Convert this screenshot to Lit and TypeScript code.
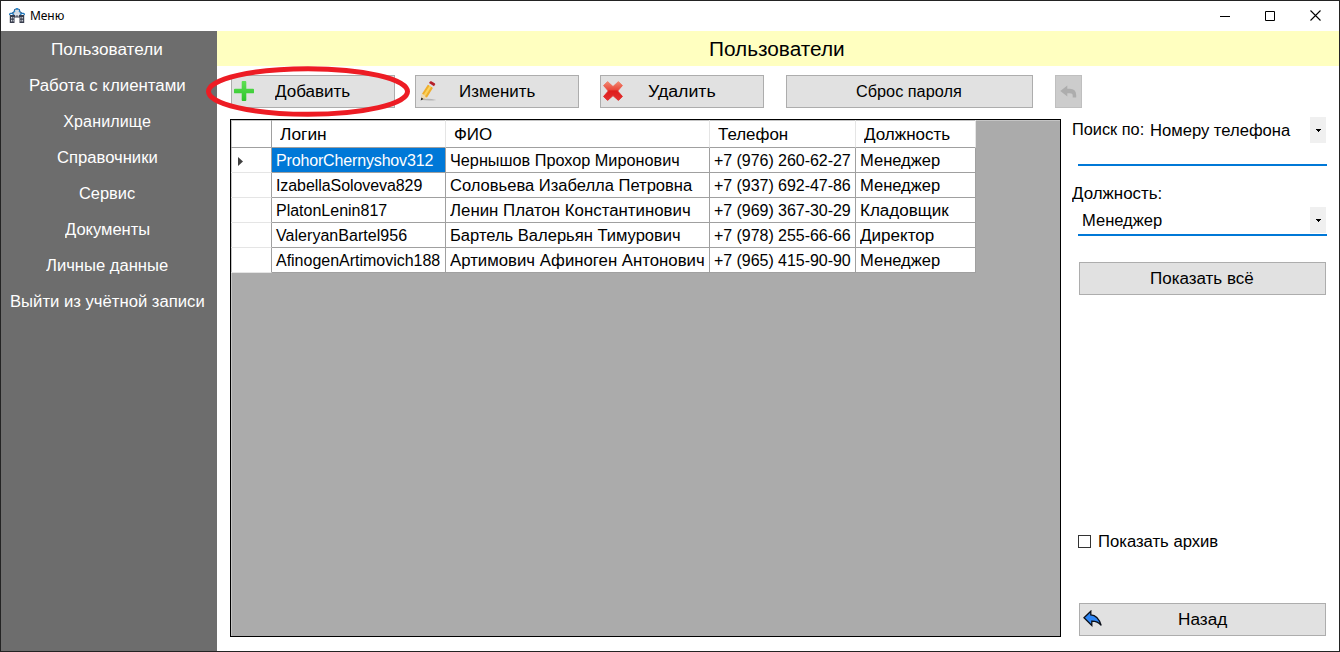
import { LitElement, html, css } from "lit";
import { customElement, property } from "lit/decorators.js";

/** Text run that is fitted to a given width: widened glyphs when short, tighter tracking when long. */
@customElement("fit-text")
class FitText extends LitElement {
  @property() text = "";
  @property({ type: Number }) w = 0;

  static styles = css`
    :host { display: inline-block; white-space: pre; flex: none; text-align: left; }
    .run { display: inline-block; transform-origin: 0 50%; }
  `;

  updated() {
    const run = this.renderRoot.querySelector(".run") as HTMLElement;
    run.style.letterSpacing = "0px";
    run.style.transform = "none";
    const natural = run.getBoundingClientRect().width;
    const target = this.w - 0.8;
    const ratio = target / natural;
    if (ratio > 1.015) {
      run.style.transform = `scaleX(${ratio.toFixed(4)})`;
    } else {
      run.style.letterSpacing = `${((target - natural) / this.text.length).toFixed(3)}px`;
    }
    this.style.width = `${this.w}px`;
  }

  render() {
    return html`<span class="run">${this.text}</span>`;
  }
}

const t = (text: string, w: number) => html`<fit-text .text=${text} .w=${w}></fit-text>`;

const MENU: [string, number][] = [
  ["Пользователи", 112.5],
  ["Работа с клиентами", 157.5],
  ["Хранилище", 88.5],
  ["Справочники", 101.5],
  ["Сервис", 57],
  ["Документы", 86],
  ["Личные данные", 123],
  ["Выйти из учётной записи", 195.5],
];

const HEADERS: [string, number][] = [
  ["Логин", 47.5],
  ["ФИО", 39],
  ["Телефон", 71],
  ["Должность", 87],
];

const ROWS: [string, number][][] = [
  [["ProhorChernyshov312", 158], ["Чернышов Прохор Миронович", 230.5], ["+7 (976) 260-62-27", 137.5], ["Менеджер", 81]],
  [["IzabellaSoloveva829", 147], ["Соловьева Изабелла Петровна", 243], ["+7 (937) 692-47-86", 137.5], ["Менеджер", 81]],
  [["PlatonLenin817", 112], ["Ленин Платон Константинович", 241.5], ["+7 (969) 367-30-29", 137.5], ["Кладовщик", 89.5]],
  [["ValeryanBartel956", 132], ["Бартель Валерьян Тимурович", 231.5], ["+7 (978) 255-66-66", 137.5], ["Директор", 75]],
  [["AfinogenArtimovich188", 165], ["Артимович Афиноген Антонович", 255.5], ["+7 (965) 415-90-90", 137.5], ["Менеджер", 81]],
];

const houseIcon = html`<svg class="house" width="16" height="16" viewBox="0 0 16 16">
  <path d="M3 7.500V4.600L5 3.600 5.600 1.600 7.400.8h1.200l1.800.8.6 2 2 1v2.900z" fill="#d3dae3"/>
  <path d="M2.600 5.800 4 4.400l1.200-.6.400-2.200L7.400.8h1.200l1.800.8.400 2.200 1.200.6 1.400 1.400" fill="none" stroke="#2f5f8d" stroke-width="1.100"/>
  <path d="M7 1h2M4.800 3.400h1.400M9.800 3.400h1.400" stroke="#1d8ad6" stroke-width="1.300"/>
  <path d="M0 6.800 1.600 5.400h2L5 6.800M11 6.800l1.400-1.400h2L16 6.800" stroke="#2379bd" stroke-width="1.400" fill="none"/>
  <path d="M.8 7h4.700v8H.8zM10.500 7h4.700v8h-4.700zM5.200 7h5.600v2.500H5.200z" fill="#383d4d"/>
  <path d="M2 9h.9v1.500H2zM3.700 9h.9v1.500h-.9zM2 11.800h.9v1.600H2zM3.700 11.800h.9v1.600h-.9zM11.500 9h.9v1.500h-.9zM13.200 9h.9v1.500h-.9zM11.500 11.800h.9v1.600h-.9zM13.200 11.800h.9v1.600h-.9zM6.200 6h.9v2.400h-.9zM7.600 6h.9v2.400h-.9zM9 6h.9v2.400H9z" fill="#e4e8ee"/>
</svg>`;

const plusIcon = html`<svg class="ico" width="20" height="20" viewBox="0 0 20 20">
  <defs><linearGradient id="g" x1="0" y1="0" x2="0" y2="1"><stop offset="0" stop-color="#5fe053"/><stop offset="1" stop-color="#2cc42a"/></linearGradient></defs>
  <path d="M8.600 0h2.800q.9 0 .9.9v6.800h6.800q.9 0 .9.9v2.800q0 .9-.9.9h-6.800v6.800q0 .9-.9.9H8.600q-.9 0-.9-.9v-6.800H.9q-.9 0-.9-.9V8.600q0-.9.9-.9h6.800V.9q0-.9.9-.9z" fill="url(#g)"/>
</svg>`;

const pencilIcon = html`<svg class="ico pencil" width="20" height="20" viewBox="0 0 20 20">
  <path d="M1.500 18.700q7-1.800 15.800.2-7 1.300-15.800-.2z" fill="#b5b5b5"/>
  <path d="M3 12.800 9 3.600l5 3.100-5.800 9.500-5.800 2.800z" fill="#efae2c"/>
  <path d="M4.800 13.400 10.700 4.600l1.700 1-5.900 9.500z" fill="#fbd35c"/>
  <path d="M3 12.800 2 19l6.200-2.800-1.800-.5-.8-1.700z" fill="#ecd9b4"/>
  <path d="m2.400 16.600-.7 2.800 2.800-1.300z" fill="#222"/>
  <path d="m9 3.600 1-1.500 5 3.100-1 1.500z" fill="#dfe0e2"/>
  <path d="m10 2.100 1-1.500q.5-.7 1.300-.3l3.400 2q.8.600.4 1.300l-1.100 1.600z" fill="#b5202a"/>
</svg>`;

const crossIcon = html`<svg class="ico" width="20" height="20" viewBox="0 0 20 20">
  <defs><linearGradient id="r" x1="0" y1="0" x2="0" y2="1"><stop offset="0" stop-color="#f08a72"/><stop offset=".42" stop-color="#ea4a3c"/><stop offset=".5" stop-color="#de1c1c"/><stop offset="1" stop-color="#e23030"/></linearGradient></defs>
  <path d="M4.600.6 10 5.600 15.400.6 19.400 4.600 14.600 10l4.800 5.400-4 4L10 14.600l-5.400 4.800-4-4L5.400 10 .6 4.600z" fill="url(#r)" stroke="url(#r)" stroke-width="1" stroke-linejoin="round"/>
</svg>`;

const undoDisabled = html`<svg width="17" height="14" viewBox="0 0 17 14">
  <path d="M.3 6 7.300.6v3.200h2.500q6.200 0 6.400 6.200v2.600h-3.500v-1.900q0-2.400-2.800-2.400H7.300v3.300z" fill="#adadad"/>
</svg>`;

const backIcon = html`<svg class="ico back" width="20" height="18" viewBox="0 0 20 18">
  <path d="M1 7.800 7.800 1.200v3.600Q15 5 18.200 15.400 14.400 11 8.800 11.200v4.300z" fill="#2e86f5" stroke="#0b0f18" stroke-width="1.300" stroke-linejoin="miter"/>
</svg>`;

const arrow = html`<svg width="5" height="3" viewBox="0 0 5 3" shape-rendering="crispEdges"><path d="M0 0h5v1H4v1H3v1H2V2H1V1H0z" fill="#000"/></svg>`;

@customElement("app-root")
class AppRoot extends LitElement {
  static styles = css`
    :host { display: block; width: 1340px; height: 652px; font: 16px/20px "Liberation Sans", Arial, sans-serif; color: #000; }
    * { box-sizing: border-box; }
    svg { display: block; flex: none; }
    .window { position: relative; width: 1340px; height: 652px; border: 1px solid #232323; background: #fff; display: flex; flex-direction: column; overflow: hidden; }
    .titlebar { height: 30px; flex: none; display: flex; align-items: center; padding-left: 8px; }
    .caption { font: 12px/16px "Noto Sans", "Open Sans", sans-serif; margin-left: 5px; flex: 1; }
    .controls { display: flex; align-items: center; gap: 35px; padding-right: 18px; margin-top: -1px; }
    .body { flex: 1; display: flex; min-height: 0; }
    .sidebar { width: 216px; background: #6d6d6d; color: #fff; flex: none; }
    .item { height: 36px; display: flex; align-items: center; justify-content: center; padding: 2px 3px 0 0; }
    .content { flex: 1; display: flex; flex-direction: column; min-width: 0; }
    .heading { height: 35px; flex: none; background: #ffffc0; display: flex; align-items: center; justify-content: center; font-size: 20px; line-height: 24px; padding-right: 2px; }
    .work { flex: 1; display: flex; align-items: flex-start; padding: 9px 0 0 13px; min-height: 0; }
    .left { width: 842px; flex: none; display: flex; flex-direction: column; }
    .toolbar { display: flex; height: 33px; flex: none; padding-left: 1px; margin-bottom: 11px; }
    .btn { height: 33px; flex: none; border: 1px solid #adadad; background: #e1e1e1; display: grid; grid-template-columns: 1fr; align-items: center; justify-items: center; padding: 0; font: inherit; color: #000; }
    .btn > * { grid-area: 1 / 1; }
    .ico { justify-self: start; margin-left: 2px; margin-top: -1px; }
    .pencil { margin-left: 3px; }
    .back { margin-left: 3px; }
    .std { width: 164px; }
    .edit { margin-left: 20px; }
    .del { margin-left: 21px; }
    .reset { width: 247px; margin-left: 22px; }
    .undo { width: 27px; margin-left: 22px; background: #ccc; border-color: #bfbfbf; }
    .grid { width: 831px; height: 518px; flex: none; border: 1px solid #000; background: #ababab; box-shadow: inset 1px 1px 0 #c4c4c4; }
    .row { display: grid; grid-template-columns: 41px 174px 264px 146px 120px; width: 745px; height: 25px; background: #fff; box-shadow: inset 1px 0 0 #c4c4c4; }
    .head { height: 28px; box-shadow: inset 1px 1px 0 #c4c4c4; }
    .cell { border-right: 1px solid #a0a0a0; border-bottom: 1px solid #a0a0a0; display: flex; align-items: center; padding: 2px 0 0 4px; }
    .head .cell { border-right-color: #e5e5e5; padding: 3px 0 0 8px; }
    .head .cell.corner { border-right-color: #a0a0a0; }
    .rowhead { border-right: 1px solid #a0a0a0; border-bottom: 1px solid #e5e5e5; display: flex; align-items: center; padding: 3px 0 0 7px; }
    .selected { background: #0078d7; color: #fff; }
    .side { width: 257px; height: 561px; display: flex; flex-direction: column; padding-top: 42px; }
    .filter { display: flex; height: 26px; align-items: center; }
    .value { margin-left: 5px; flex: 1; padding-top: 1px; }
    .drop { width: 16px; height: 26px; background: #f0f0f0; display: flex; align-items: center; justify-content: center; padding-top: 1px; margin-right: 3px; }
    .line { height: 2px; background: #0078d7; margin: 0 2px 0 6px; flex: none; }
    .first { margin-top: 21px; }
    .label { margin-top: 18px; height: 20px; margin-bottom: 3px; }
    .value.role { margin-left: 10px; }
    .line.second { margin-top: 1px; }
    .wide { width: 247px; margin-left: 7px; }
    .all { margin-top: 26px; }
    .check { display: flex; align-items: center; height: 20px; margin: auto 0 52px 6px; gap: 7px; }
    .check fit-text { padding-top: 2px; }
    .box { width: 13px; height: 13px; border: 1px solid #333; background: #fff; }
    .mark { position: absolute; left: 204px; top: 63px; }
  `;

  render() {
    return html`<div class="window">
      <div class="titlebar">
        ${houseIcon}
        <span class="caption">${t("Меню", 35)}</span>
        <div class="controls">
          <svg width="10" height="10"><path d="M0 5.500h10" stroke="#000"/></svg>
          <svg width="10" height="10"><path d="M.5.500h9v9h-9z" fill="none" stroke="#000"/></svg>
          <svg width="11" height="11"><path d="m.5.500 10 10M10.500.500l-10 10" stroke="#000" stroke-width="1.100"/></svg>
        </div>
      </div>
      <div class="body">
        <nav class="sidebar">
          ${MENU.map(([s, w]) => html`<div class="item">${t(s, w)}</div>`)}
        </nav>
        <main class="content">
          <div class="heading">${t("Пользователи", 136.5)}</div>
          <div class="work">
            <div class="left">
              <div class="toolbar">
                <button class="btn std">${plusIcon}${t("Добавить", 76)}</button>
                <button class="btn std edit">${pencilIcon}${t("Изменить", 77)}</button>
                <button class="btn std del">${crossIcon}${t("Удалить", 68.5)}</button>
                <button class="btn reset">${t("Сброс пароля", 106.5)}</button>
                <button class="btn undo">${undoDisabled}</button>
              </div>
              <div class="grid">
                <div class="row head">
                  <div class="cell corner"></div>
                  ${HEADERS.map(([s, w]) => html`<div class="cell">${t(s, w)}</div>`)}
                </div>
                ${ROWS.map((r, i) => html`<div class="row">
                  <div class="rowhead">${i === 0
                    ? html`<svg width="5" height="9" viewBox="0 0 5 9"><path d="M0 0 5 4.500 0 9z" fill="#404040"/></svg>`
                    : ""}</div>
                  ${r.map(([s, w], j) => html`<div class="cell ${i === 0 && j === 0 ? "selected" : ""}">${t(s, w)}</div>`)}
                </div>`)}
              </div>
            </div>
            <aside class="side">
              <div class="filter">${t("Поиск по:", 73)}<span class="value">${t("Номеру телефона", 141)}</span><span class="drop">${arrow}</span></div>
              <div class="line first"></div>
              <div class="label">${t("Должность:", 91)}</div>
              <div class="filter"><span class="value role">${t("Менеджер", 81)}</span><span class="drop">${arrow}</span></div>
              <div class="line second"></div>
              <button class="btn wide all">${t("Показать всё", 104.5)}</button>
              <div class="check"><span class="box"></span>${t("Показать архив", 121)}</div>
              <button class="btn wide">${backIcon}${t("Назад", 50)}</button>
            </aside>
          </div>
        </main>
      </div>
      <svg class="mark" width="208" height="56" viewBox="0 0 208 56"><ellipse cx="103" cy="27.500" rx="99.500" ry="22.800" fill="none" stroke="#ed1c24" stroke-width="5"/></svg>
    </div>`;
  }
}
